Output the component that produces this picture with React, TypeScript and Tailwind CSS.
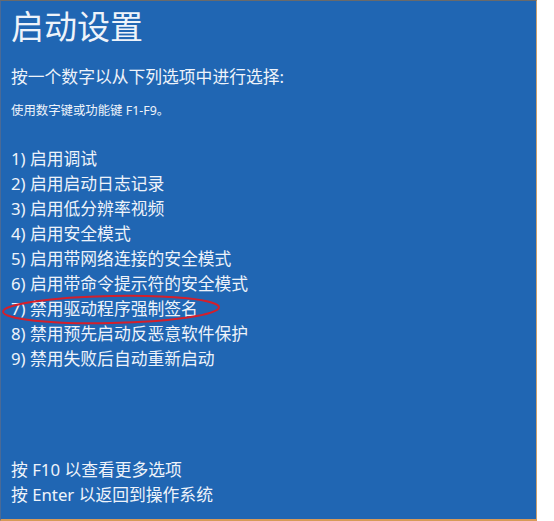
import React from "react";

const items = [
  "1) 启用调试",
  "2) 启用启动日志记录",
  "3) 启用低分辨率视频",
  "4) 启用安全模式",
  "5) 启用带网络连接的安全模式",
  "6) 启用带命令提示符的安全模式",
  "7) 禁用驱动程序强制签名",
  "8) 禁用预先启动反恶意软件保护",
  "9) 禁用失败后自动重新启动",
];

export default function App() {
  return (
    <div
      className="w-[554px] h-[521px] bg-white flex"
      style={{ fontFamily: '"Noto Sans", "Noto Sans CJK SC", sans-serif' }}
    >
      <div className="relative w-[537px] h-[521px] bg-[#2066b3] border-t border-l border-t-[#6a6a6a] border-l-[#4a6a96] border-r border-r-[#c9a070] border-b-2 border-b-[#d89a58] text-[#eef3fa] pl-[10px] flex flex-col">
        <div className="mt-[9px] text-[33px] leading-[33px] whitespace-nowrap">启动设置</div>
        <div className="mt-[21px] text-[16.8px] leading-[25px] whitespace-nowrap">
          按一个数字以从下列选项中进行选择:
        </div>
        <div className="mt-[14px] text-[12.4px] leading-[16px] whitespace-nowrap">
          使用数字键或功能键 F1-F9。
        </div>
        <div className="mt-[27px] flex flex-col">
          {items.map((t) => (
            <div key={t} className="text-[16.8px] leading-[25px] whitespace-nowrap">
              {t}
            </div>
          ))}
        </div>
        <div className="mt-[86px] flex flex-col">
          <div className="text-[16.8px] leading-[25px] whitespace-nowrap">按 F10 以查看更多选项</div>
          <div className="text-[16.8px] leading-[25px] whitespace-nowrap">按 Enter 以返回到操作系统</div>
        </div>
        <svg
          className="absolute left-0 top-[289px] pointer-events-none"
          width="230"
          height="40"
          viewBox="0 0 230 40"
        >
          <ellipse
            cx="110"
            cy="19.5"
            rx="108"
            ry="13.5"
            fill="none"
            stroke="#d41f2b"
            strokeWidth="2"
            transform="rotate(-1.2 110 19.5)"
          />
        </svg>
      </div>
    </div>
  );
}
